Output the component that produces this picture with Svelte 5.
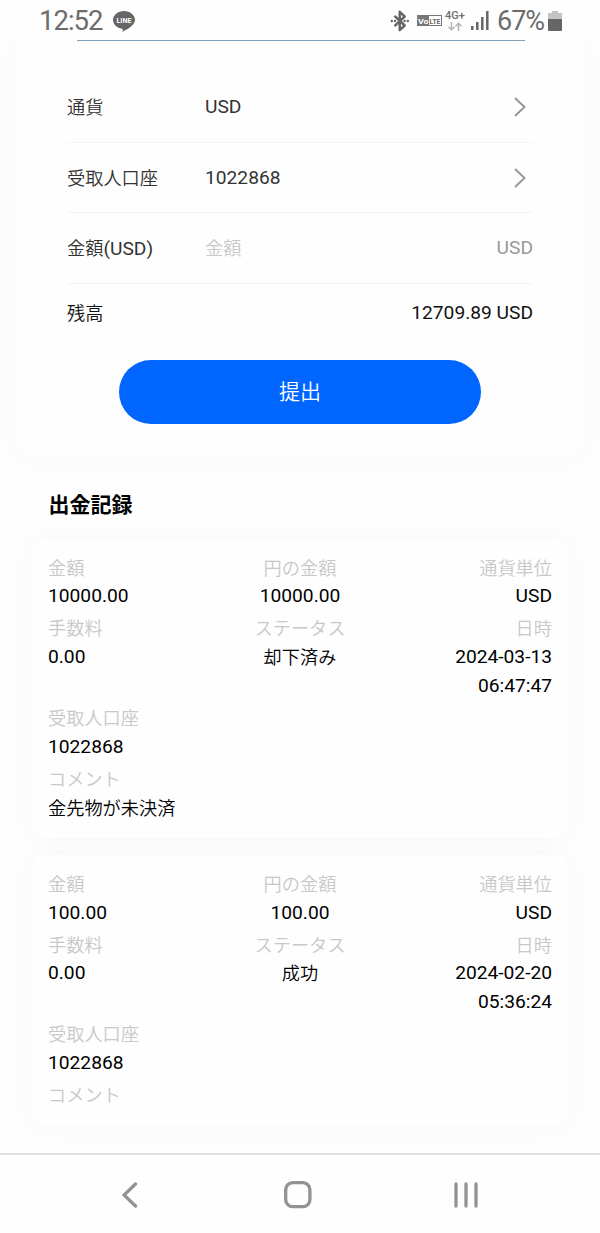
<script>
  const records = [
    {
      amount: '10000.00',
      yenAmount: '10000.00',
      currency: 'USD',
      fee: '0.00',
      status: '却下済み',
      date: '2024-03-13 06:47:47',
      account: '1022868',
      comment: '金先物が未決済',
    },
    {
      amount: '100.00',
      yenAmount: '100.00',
      currency: 'USD',
      fee: '0.00',
      status: '成功',
      date: '2024-02-20 05:36:24',
      account: '1022868',
      comment: '',
    },
  ];

  let amount = '';
</script>

<div class="screen">
  <header class="status">
    <span class="clock">12:52</span>
    <svg class="line-app" width="22" height="21" viewBox="0 0 22 21">
      <path d="M11 0C4.9 0 0 4 0 9c0 4.400 3.800 8 9 8.800 1 .2.9.8.6 2.900 2.800-1.300 12.400-6 12.400-11.700C22 4 17.100 0 11 0z" fill="#666" />
      <text x="11" y="11.600" text-anchor="middle" textLength="15" lengthAdjust="spacingAndGlyphs">LINE</text>
    </svg>
    <div class="indicators">
      <svg class="bluetooth" width="20" height="22" viewBox="0 0 20 22">
        <path d="M4.500 5.800l10.200 9.700-5 4.700V1.800l5 4.700L4.500 16.200" fill="none" stroke="#666" stroke-width="2.500" stroke-linejoin="round" />
        <circle cx="1.800" cy="11" r="1.200" fill="#666" />
        <circle cx="5" cy="11" r="1.200" fill="#666" />
        <circle cx="14.600" cy="11" r="1.200" fill="#666" />
        <circle cx="17.800" cy="11" r="1.200" fill="#666" />
      </svg>
      <svg class="volte" width="25" height="13" viewBox="0 -1 25 13">
        <rect x=".5" y=".5" width="24" height="10" fill="#fff" stroke="#777" />
        <rect width="12" height="11" fill="#777" />
        <text x="1" y="8.600" fill="#fff" textLength="10.500" lengthAdjust="spacingAndGlyphs">Vo</text>
        <text x="12.600" y="8.600" fill="#666" textLength="10.800" lengthAdjust="spacingAndGlyphs">LTE</text>
      </svg>
      <div class="network">
        <span>4G+</span>
        <svg width="14" height="9" viewBox="0 0 14 9" fill="none" stroke="#b5b5b5" stroke-width="1.500">
          <path d="M3.500 0v7.500M.5 4.800l3 3 3-3M10.500 9V1.500M7.500 4.200l3-3 3 3" />
        </svg>
      </div>
      <svg class="signal" width="18" height="19" viewBox="0 0 18 19" stroke="#666" stroke-width="2.500">
        <path d="M1.300 19v-4M6.300 19v-8M11.300 19V6M16.300 19V0" />
      </svg>
      <span class="percent">67%</span>
      <svg class="battery" width="14" height="20" viewBox="0 0 14 20">
        <path d="M4 0h6v2h4v7H0V2h4z" fill="#c4c4c4" />
        <path d="M0 8h14v11a1 1 0 0 1-1 1H1a1 1 0 0 1-1-1z" fill="#666" />
      </svg>
    </div>
  </header>

  <main>
    <section class="form-card">
      <div class="field-edge"></div>
      <div class="row">
        <span class="name jp">通貨</span>
        <span class="value">USD</span>
        <svg width="12" height="20" viewBox="0 0 12 20"><path d="M1 1l9.500 9L1 19" /></svg>
      </div>
      <div class="row">
        <span class="name jp">受取人口座</span>
        <span class="value">1022868</span>
        <svg width="12" height="20" viewBox="0 0 12 20"><path d="M1 1l9.500 9L1 19" /></svg>
      </div>
      <label class="row">
        <span class="name"><span class="jp">金額</span>(USD)</span>
        <input class="value jp" type="text" placeholder="金額" bind:value={amount} />
        <span class="unit">USD</span>
      </label>
      <div class="balance">
        <span class="jp">残高</span>
        <span>12709.89 USD</span>
      </div>
      <button class="jp">提出</button>
    </section>

    <h2 class="jp">出金記録</h2>

    {#each records as record}
      <article>
        <div class="cell">
          <span class="label jp">金額</span>
          <span>{record.amount}</span>
        </div>
        <div class="cell center">
          <span class="label jp">円の金額</span>
          <span>{record.yenAmount}</span>
        </div>
        <div class="cell right">
          <span class="label jp">通貨単位</span>
          <span>{record.currency}</span>
        </div>
        <div class="cell">
          <span class="label jp">手数料</span>
          <span>{record.fee}</span>
        </div>
        <div class="cell center">
          <span class="label jp">ステータス</span>
          <span class="jp">{record.status}</span>
        </div>
        <div class="cell right">
          <span class="label jp">日時</span>
          <span>{record.date}</span>
        </div>
        <div class="cell wide">
          <span class="label jp">受取人口座</span>
          <span>{record.account}</span>
        </div>
        <div class="cell wide">
          <span class="label jp">コメント</span>
          {#if record.comment}
            <span class="jp">{record.comment}</span>
          {/if}
        </div>
      </article>
    {/each}
  </main>

  <nav>
    <svg width="16" height="26" viewBox="0 0 16 26"><path d="M13.500 2L2 13l11.500 11" /></svg>
    <svg class="home" width="28" height="28" viewBox="0 0 28 28"><rect x="1.700" y="1.700" width="24.200" height="24" rx="7" /></svg>
    <svg width="26" height="26" viewBox="0 0 26 26"><path d="M3 2v22M13 2v22M23 2v22" /></svg>
  </nav>
</div>

<style>
  :global(body) {
    background: #fefefe;
  }

  .screen {
    display: flex;
    flex-direction: column;
    width: 600px;
    height: 1233px;
    box-sizing: border-box;
    overflow: hidden;
    background: #fefefe;
    color: #111;
    font-family: Roboto, "Noto Sans CJK JP", sans-serif;
    font-size: 19.2px;
    line-height: 28.8px;
  }

  .jp {
    padding-bottom: 2px;
    font-family: "Noto Sans CJK JP", sans-serif;
    font-size: 18.2px;
    font-weight: 350;
    line-height: 26.8px;
  }

  .status {
    display: flex;
    align-items: center;
    flex: none;
    height: 40px;
    box-sizing: border-box;
    padding: 2px 38px 0 39px;
    background: #fefefe;
    color: #6c6c6c;
    position: relative;
    z-index: 1;
  }

  .clock {
    width: 74px;
    font-size: 27.5px;
    font-weight: 400;
    letter-spacing: -1px;
  }

  .line-app text {
    font: bold 7px Roboto, sans-serif;
    fill: #fff;
  }

  .indicators {
    display: flex;
    align-items: center;
    margin-left: auto;
  }

  .bluetooth {
    margin-left: -1px;
    margin-right: 7px;
  }

  .volte {
    margin-right: 3px;
    overflow: visible;
    font: bold 8px Roboto, sans-serif;
  }

  .network {
    display: flex;
    flex-direction: column;
    align-items: center;
    width: 20px;
    margin-right: 6px;
    font-size: 11px;
    font-weight: 500;
    line-height: 12px;
  }

  .signal {
    margin-right: 8px;
  }

  .percent {
    width: 51px;
    font-size: 27px;
    font-weight: 400;
    letter-spacing: -1px;
  }

  main {
    flex: none;
    height: 1113px;
    overflow: hidden;
  }

  .form-card {
    height: 416px;
    margin: 0 16px;
    padding: 0 51px;
    box-sizing: border-box;
    border-radius: 0 0 16px 16px;
    background: #fefefe;
    box-shadow: 0 0 32px rgba(0, 0, 0, 0.03);
  }

  .field-edge {
    height: 32px;
    margin: 0 8px 0 10px;
    box-sizing: border-box;
    border-top: 1px solid #7ba0bd;
  }

  .row {
    display: flex;
    align-items: center;
    height: 70.5px;
    padding-top: 1.500px;
    box-sizing: border-box;
    border-bottom: 1.500px solid #f3f3f3;
    color: #333;
  }

  .row .name {
    width: 138px;
    white-space: nowrap;
  }

  .row .value {
    flex: 1;
  }

  .row svg {
    margin-right: 7px;
    margin-bottom: 1px;
    fill: none;
    stroke: #999;
    stroke-width: 2;
  }

  .row input {
    min-width: 0;
    padding: 0 0 2px;
    border: none;
    outline: none;
    background: none;
  }

  .row input::placeholder {
    color: #c8c8c8;
    opacity: 1;
  }

  .row .unit {
    color: #999;
  }

  .balance {
    display: flex;
    align-items: center;
    justify-content: space-between;
    height: 60px;
  }

  button {
    display: block;
    width: 362px;
    height: 64px;
    margin: 16.800px auto 0;
    border: none;
    border-radius: 32px;
    background: #06f;
    color: #fff;
  }

  button.jp {
    padding-bottom: 4px;
    font-size: 21px;
  }

  h2 {
    margin: 34px 48.500px 19.800px;
    color: #000;
  }

  h2.jp {
    font-size: 21px;
    font-weight: 700;
  }

  article {
    display: grid;
    grid-template-columns: repeat(3, 1fr);
    row-gap: 3.200px;
    margin: 0 32px 16.500px;
    padding: 15px 16px 16px;
    border-radius: 14px;
    background: #fefefe;
    box-shadow: 0 0 32px rgba(0, 0, 0, 0.03);
  }

  .cell {
    display: flex;
    flex-direction: column;
    color: #000;
  }

  .center {
    text-align: center;
  }

  .right {
    text-align: right;
  }

  .wide {
    grid-column: 1 / -1;
  }

  .label {
    color: #c8c8c8;
  }

  nav {
    display: flex;
    align-items: center;
    justify-content: space-between;
    flex: 1;
    box-sizing: border-box;
    padding: 2px 121px 0 122px;
    border-top: 2px solid #e0e0e0;
    background: #fefefe;
  }

  nav svg {
    fill: none;
    stroke: #929292;
    stroke-width: 3.300;
    stroke-linecap: round;
  }

  nav .home {
    margin-left: 5px;
  }
</style>
